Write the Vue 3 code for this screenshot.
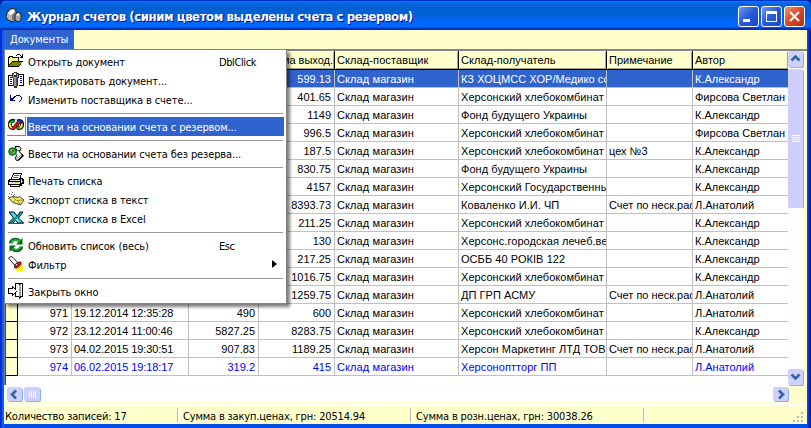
<script setup>
const menu = [
  { icon: 'open', text: 'Открыть документ', key: 'DblClick' },
  { icon: 'edit', text: 'Редактировать документ...' },
  { icon: 'undo', text: 'Изменить поставщика в счете...' },
  null,
  { icon: 'chain', text: 'Ввести на основании счета с резервом...', active: true },
  null,
  { icon: 'scroll', text: 'Ввести на основании счета без резерва...' },
  null,
  { icon: 'print', text: 'Печать списка' },
  { icon: 'mail', text: 'Экспорт списка в текст' },
  { icon: 'excel', text: 'Экспорт списка в Excel' },
  null,
  { icon: 'refresh', text: 'Обновить список (весь)', key: 'Esc' },
  { icon: 'torch', text: 'Фильтр', sub: true },
  null,
  { icon: 'exit', text: 'Закрыть окно' },
]

const bread = 'Херсонский хлебокомбинат'
const alex = 'К.Александр'
const firs = 'Фирсова Светлан'
const anat = 'Л.Анатолий'
const note = 'Счет по неск.рас'
const store = 'Склад магазин'
const rows = [
  ['', '', '', '599.13', store, 'КЗ ХОЦМСС ХОР/Медико со', '', alex],
  ['', '', '', '401.65', store, bread, '', firs],
  ['', '', '', '1149', store, 'Фонд будущего Украины', '', alex],
  ['', '', '', '996.5', store, bread, '', firs],
  ['', '', '', '187.5', store, bread, 'цех №3', alex],
  ['', '', '', '830.75', store, 'Фонд будущего Украины', '', alex],
  ['', '', '', '4157', store, 'Херсонский Государственны', '', alex],
  ['', '', '', '8393.73', store, 'Коваленко И.И. ЧП', note, anat],
  ['', '', '', '211.25', store, bread, '', alex],
  ['', '', '', '130', store, 'Херсонс.городская лечеб.ве', '', alex],
  ['', '', '', '217.25', store, 'ОСББ 40 РОКІВ 122', '', alex],
  ['', '', '', '1016.75', store, bread, '', alex],
  ['', '', '', '1259.75', store, 'ДП ГРП АСМУ', note, anat],
  ['971', '19.12.2014 12:35:28', '490', '600', store, bread, '', anat],
  ['972', '23.12.2014 11:00:46', '5827.25', '8283.75', store, bread, '', alex],
  ['973', '04.02.2015 19:30:51', '907.83', '1189.25', store, 'Херсон Маркетинг ЛТД ТОВ', note, anat],
  ['974', '06.02.2015 19:18:17', '319.2', '415', store, 'Херсоноптторг ПП', '', anat],
]
const heads = ['', '', '', 'Сумма выход.', 'Склад-поставщик', 'Склад-получатель', 'Примечание', 'Автор']
</script>

<template>
  <div class="window">
    <header class="title">
      <svg class="app-icon" width="16" height="16" viewBox="0 0 16 16">
        <path d="M1 5 L4 1 L8 0 L10 3 L10 11 L7 14 L2 12 L0 9Z" fill="#b8b8b8" stroke="#222" stroke-width="1" />
        <path d="M2 5 L5 2 L8 2 L8 5 L5 7Z" fill="#fff" />
        <path d="M6 7 L9 4 L9 11 L6 13Z" fill="#777" />
        <path d="M9 7 L12 4 L15 6 L15 12 L12 14 L9 12Z" fill="#aaa" stroke="#222" />
        <path d="M10 7 L12 5 L14 7 L12 8Z" fill="#eee" />
      </svg>
      <h1>Журнал счетов (синим цветом выделены счета с резервом)</h1>
      <div class="controls">
        <span class="ctl"><svg width="19" height="19" viewBox="0 0 19 19"><path d="M4 12h7v3H4z" fill="#fff" /></svg></span>
        <span class="ctl"><svg width="19" height="19" viewBox="0 0 19 19"><path d="M4 4h11v11H4zM5 7v7h9V7z" fill="#fff" fill-rule="evenodd" /></svg></span>
        <span class="ctl close"><svg width="19" height="19" viewBox="0 0 19 19"><path d="M5 5l9 9M14 5l-9 9" stroke="#fff" stroke-width="2.2" /></svg></span>
      </div>
    </header>

    <div class="body">
      <nav class="menubar"><span class="menu-head">Документы</span></nav>
      <div class="grid-area">
        <div class="sheet">
          <div class="row head">
            <span class="ind"></span>
            <span v-for="(h, i) in heads" :key="i" class="cell" :class="'c' + i"><span>{{ h }}</span></span>
          </div>
          <div v-for="(r, n) in rows" :key="n" class="row" :class="{ sel: n === 0, blue: n === 16 }">
            <span class="ind"></span>
            <span v-for="(v, i) in r" :key="i" class="cell" :class="'c' + i"><span>{{ v }}</span></span>
          </div>
        </div>
        <div class="vbar">
          <span class="sb"><svg width="15" height="15" viewBox="0 0 15 15"><path d="M3.5 9.5l4-4 4 4" /></svg></span>
          <span class="vthumb"><i></i><i></i><i></i><i></i></span>
          <span class="vtrack"></span>
          <span class="sb"><svg width="15" height="15" viewBox="0 0 15 15"><path d="M3.5 5.5l4 4 4-4" /></svg></span>
        </div>
      </div>
      <div class="hbar">
        <span class="sb"><svg width="15" height="15" viewBox="0 0 15 15"><path d="M9 3.5l-4 4 4 4" /></svg></span>
        <span class="hthumb"><i></i><i></i><i></i><i></i></span>
        <span class="htrack"></span>
        <span class="sb"><svg width="15" height="15" viewBox="0 0 15 15"><path d="M6 3.5l4 4-4 4" /></svg></span>
      </div>
      <footer class="status">
        <span class="s1">Количество записей: 17</span>
        <span class="s2">Сумма в закуп.ценах, грн: 20514.94</span>
        <span class="s3">Сумма в розн.ценах, грн: 30038.26</span>
        <span class="s4"></span>
        <svg class="grip" width="11" height="11" viewBox="0 0 11 11"><path d="M8 0h2v2h-2zM4 4h2v2h-2zM8 4h2v2h-2zM0 8h2v2h-2zM4 8h2v2h-2zM8 8h2v2h-2z" fill="#b8b4b0" /></svg>
      </footer>
    </div>

    <div class="popup">
      <template v-for="(m, i) in menu" :key="i">
        <div v-if="!m" class="sep"></div>
        <div v-else class="item" :class="{ active: m.active }">
          <span class="ico">
            <svg width="16" height="16" viewBox="0 0 16 16" shape-rendering="crispEdges">
              <g v-if="m.icon === 'open'">
                <path d="M0 4h1V3h4v1h6v4h4l-4 6H0z" fill="#000" />
                <path d="M1 5h1V4h2v1h6v3H4l-3 4z" fill="#ffff80" />
                <path d="M4 9h10l-3 4H1z" fill="#808000" />
                <path d="M8 2h1V1h3v1h1v1h1V1h1v4h-3V4h1V3h-1V2H9v1H8z" fill="#000" />
              </g>
              <g v-else-if="m.icon === 'edit'">
                <path d="M0 3h5v11H0zM11 2h5v12h-5z" fill="#000" />
                <path d="M1 4h4v9H1zM11 3h4v10h-4z" fill="#fff" />
                <path d="M2 5h2v1H2zM2 7h2v1H2zM2 9h2v1H2zM2 11h2v1H2zM12 4h2v1h-2zM12 6h2v1h-2zM12 8h2v1h-2zM12 10h2v1h-2z" fill="#0000c0" />
                <path d="M4 1h2V0h3v1h2v5h-1v8H9v2H6v-2H5V6H4z" fill="#333" />
                <path d="M5 2h1v3h3V2h1v3H9v9H6V6H5z" fill="#999" />
                <path d="M6 1h2v2H6z" fill="#fff" />
                <path d="M8 6h1v8H8z" fill="#555" />
              </g>
              <g v-else-if="m.icon === 'undo'" fill="#000080">
                <path d="M2 4h1v3h1v1h1v1h2v1H2z" />
                <path d="M4 7h1V6h1V5h2V4h4v1h1v1h1v3h-1v1h-1v1h-1v-1h1V9h1V6h-1V5H8v1H7v1H6v1H4z" />
              </g>
              <g v-else-if="m.icon === 'chain'" fill="none" shape-rendering="auto">
                <path d="M6.5 3.2C4 2 1.8 3.500 1.800 6.500s2.500 4.500 4.700 3.200M9.500 3.500C12 2 14.200 3.500 14.200 6.500S12 11 9.500 9.700" stroke="#000" stroke-width="3.800" />
                <path d="M6.500 9.700L11 4" stroke="#000" stroke-width="4" />
                <path d="M7 4C5 2.600 3 3 2 5" stroke="#00b030" stroke-width="2" />
                <path d="M2 5C1.400 7 2 9 4 10" stroke="#ffee00" stroke-width="2" />
                <path d="M9.500 4C12 2.500 13.500 3.500 14 5.500" stroke="#2020ff" stroke-width="2" />
                <path d="M14 5.500C14.400 8 13 9.800 11 10" stroke="#ffee00" stroke-width="2" />
                <path d="M11.500 10.200L9 9.200" stroke="#00b030" stroke-width="2" />
                <path d="M4 10.200C7 11 9 4 12 3.600" stroke="#f01010" stroke-width="2.200" />
                <path d="M4 6.500h1.500M11 7.200h1" stroke="#fff" stroke-width="1.500" />
              </g>
              <g v-else-if="m.icon === 'scroll'" shape-rendering="auto">
                <path d="M7 1.500h4.500l1.500 2-.5 2L9 6zM10.500 5.500l4.500 5-5.500 5-1.500-.5-.5-2z" fill="#e8e8e8" stroke="#000" />
                <path d="M8 7l2-2 3.500 5-4 3z" fill="#fff" stroke="#777" stroke-width=".7" />
                <path d="M13.500 9.500l1.500 1.500-5 4.500" fill="none" stroke="#000" stroke-width="1.300" />
                <circle cx="4.500" cy="6.500" r="3.800" fill="#00c840" stroke="#004818" />
                <path d="M3 5h3v3H3z" fill="#e82020" />
                <path d="M3 5h1v1H3zM5 7h1v1H5z" fill="#ffee20" />
              </g>
              <g v-else-if="m.icon === 'print'">
                <path d="M5 1h9v2h-1v3h2v1h1v5h-2v2h-2v1H2v-2H0V8h1V7h2V5h1V3h1z" fill="#000" />
                <path d="M6 2h7L11 7H4l1-3z" fill="#fff" />
                <path d="M6 3h5v1H6zM5 5h5v1H5z" fill="#555" />
                <path d="M2 8h10v1H2zM1 10h11v2H1zM13 8h1v3h-1z" fill="#e4e4e4" />
                <path d="M3 13h8v1H3z" fill="#fff" />
                <path d="M7 10h3v1H7z" fill="#e0d000" />
                <path d="M13 7h1v1h-1zM14 9h1v1h-1z" fill="#888" />
              </g>
              <g v-else-if="m.icon === 'mail'" shape-rendering="auto">
                <path d="M.5 7L5 5.500l5 1 1.500-1L16 9l-3.500 5L5 11.500z" fill="#f5e56b" stroke="#333" stroke-width=".9" />
                <path d="M5 6l3.500 3.500L15 9M5 11l2.500-2M10 9.500l2 4" fill="none" stroke="#8d7a00" stroke-width=".8" />
                <path d="M1 2h1v1H1zM4 1h1v1H4zM3 3h1v1H3zM6 3h1v1H6zM0 5h1v1H0zM5 4h1v1H5z" fill="#666" />
              </g>
              <g v-else-if="m.icon === 'excel'" shape-rendering="auto">
                <path d="M1 2h5l3 4 3-4h3l-4.500 6 5 5H10L7.500 10.500 5 13H.5l5-5z" fill="#48dede" stroke="#000" />
                <path d="M14.500 2.500L9 8l-5 5H1l5.500-5L12 2.500z" fill="#008888" />
                <path d="M.5 13.500h15" stroke="#006868" />
              </g>
              <g v-else-if="m.icon === 'refresh'" shape-rendering="auto">
                <path d="M2.500 6.500C3 2.500 8 1 11.500 4" fill="none" stroke="#006b16" stroke-width="3.400" />
                <path d="M14.500 1v6.500H8z" fill="#006b16" />
                <path d="M3 6C4 2.800 8 1.800 11.500 4.500" fill="none" stroke="#40c850" stroke-width="1.300" />
                <path d="M13.500 9.500C13 13.500 8 15 4.500 12" fill="none" stroke="#006b16" stroke-width="3.400" />
                <path d="M1.500 15V8.500H8z" fill="#006b16" />
                <path d="M13 10C12 13 8 14 4.500 11.500" fill="none" stroke="#20a830" stroke-width="1.300" />
              </g>
              <g v-else-if="m.icon === 'torch'">
                <g shape-rendering="auto">
                  <path d="M.5 2L3 .5l2 1 4.500 5L6.500 9z" fill="#fff" stroke="#222" />
                  <path d="M6.500 9.500L10 6h3v2.500L9.500 12h-3z" fill="#d81818" stroke="#500" stroke-width=".8" />
                </g>
                <path d="M8 8h1v1H8z" fill="#fff" />
                <path d="M13 9h1v1h-1zM12 10h1v1h-1zM14 10h1v1h-1zM11 11h1v1h-1zM13 11h1v1h-1zM10 12h1v1h-1zM12 12h1v1h-1zM14 12h1v1h-1zM9 13h1v1H9zM11 13h1v1h-1zM13 13h1v1h-1zM8 14h1v1H8zM10 14h1v1h-1zM12 14h1v1h-1zM14 14h1v1h-1z" fill="#f5e600" />
              </g>
              <g v-else>
                <path d="M7 0h8v14h-2v1h-1v1h-1v-2H7v-3H6v1H5v1H4v-2H0V5h4V3h1v1h1v1h1z" fill="#000" />
                <path d="M8 1h3v12H8V9h1V8H8zM1 6h4V5l3 3-3 3v-1H1z" fill="#fff" />
                <path d="M10 3h1V2h1V1h1v12h-1v1h-1V3z" fill="#a0a0a0" />
                <path d="M13 1h1v12h-1z" fill="#fff" />
              </g>
            </svg>
          </span>
          <span class="lbl"><span>{{ m.text }}</span><span v-if="m.key" class="key">{{ m.key }}</span><i v-if="m.sub" class="arr"></i></span>
        </div>
      </template>
    </div>
  </div>
</template>

<style>
body { background: #00209f; overflow: hidden; }
</style>

<style scoped>
* { box-sizing: border-box; }
.window {
  position: relative; width: 811px; height: 428px; display: flex; flex-direction: column;
  padding: 0 4px 4px 4px; overflow: hidden; border-radius: 7px 7px 0 0;
  background: linear-gradient(90deg, #0028c8 0, #0033d8 2px, #0064ff 2px, #0064ff 4px, #0050e8 4px, #0050e8 807px, #0048e8 808px, #0028b0 809px, #001898 811px);
  font: 11px "DejaVu Sans Condensed", "DejaVu Sans", sans-serif; font-stretch: condensed; color: #000;
}
.title {
  height: 30px; margin: 0 -4px; padding: 3px 6px 0 6px; display: flex; align-items: center; flex: none;
  background: linear-gradient(#0030c0 0, #0038d0 1px, #0878ff 1px, #0860e0 4px, #0060d0 8px, #0062dc 16px, #0068ff 21px, #0068ff 27px, #0038c8 28px, #0028b8 30px);
}
.app-icon { flex: none; margin-top: -1px; }
h1 { margin: 0 0 0 5px; flex: 1; font-size: 13px; font-weight: bold; line-height: 20px; letter-spacing: -.41px; color: #fff; white-space: nowrap; text-shadow: 1px 1px #001080; }
.controls { display: flex; gap: 2px; }
.ctl { width: 21px; height: 21px; border: 1px solid #fff; border-radius: 3px; background: linear-gradient(135deg, #6f98f0, #2858d8 50%, #1d48c8); display: flex; }
.ctl svg { flex: none; }
.close { background: linear-gradient(135deg, #f09070, #d84828 50%, #b83010); }
.body { display: flex; flex-direction: column; height: 394px; background: #ffffcc; }
.menubar { height: 19px; flex: none; }
.menu-head { display: block; width: 70px; height: 19px; padding-left: 6px; line-height: 19px; letter-spacing: -.1px; color: #fff; background: #3163ce; white-space: nowrap; }
.grid-area { display: flex; height: 336px; border-top: 2px solid #848284; border-left: 1px solid #848284; padding-right: 3px; }
.sheet { flex: 1; background: #fff; overflow: hidden; border-left: 1px solid #444; display: flex; flex-direction: column; }
.row { display: flex; height: 18px; flex: none; font: 11px "Liberation Sans", Arial, sans-serif; }
.head { height: 19px; background: #ffffcc; }
.ind { width: 12px; flex: none; background: #ffffcc; border-right: 1px solid #000; border-bottom: 1px solid #000; }
.cell { border-right: 1px solid #c0c0c0; border-bottom: 1px solid #c0c0c0; padding: 1px 3px 0 2px; line-height: 17px; white-space: nowrap; overflow: hidden; flex: none; }
.head .cell { border-right: 1px solid #000; border-bottom: 1px solid #000; box-shadow: inset 1px 1px #fff, inset -1px -1px #aaa58c; }
.sel .cell { background: #3163ce; color: #fff; }
.blue { color: #0000ff; }
.c0 { width: 54px; text-align: right; }
.c1 { width: 117px; letter-spacing: -.08px; }
.c2 { width: 70px; text-align: right; }
.c3 { width: 76px; text-align: right; }
.c4 { width: 124px; letter-spacing: .1px; }
.c5 { width: 148px; letter-spacing: .06px; padding-right: 0; }
.c6 { width: 86px; padding-right: 0; }
.c7 { width: 96px; padding-right: 0; border-right: 0; }
.vbar { width: 16px; flex: none; display: flex; flex-direction: column; background: #fff; }
.sb { width: 15px; height: 16px; flex: none; display: flex; background: #cecffa; border-radius: 2px; box-shadow: 1px 1px #84b8d8; }
.sb path { fill: none; stroke: #31659c; stroke-width: 2.6; }
.vthumb { height: 139px; margin-top: 2px; width: 15px; flex: none; background: #cecfff; border-radius: 2px; box-shadow: 1px 1px #84b8d8; display: flex; flex-direction: column; align-items: center; justify-content: center; gap: 1px; }
.vthumb i { width: 8px; height: 1px; background: #fff; }
.vtrack { flex: 1; background: #fefefa; }
.hbar { height: 18px; flex: none; margin: 0 19px 1px 1px; padding: 1px 0 1px 2px; display: flex; background: #fff; border-top: 1px solid #ffffcc; border-bottom: 1px solid #ffffcc; }
.hbar .sb { height: 14px; }
.hthumb { width: 16px; height: 14px; margin-left: 2px; background: #cecfff; border-radius: 2px; box-shadow: 1px 1px #84b8d8; display: flex; align-items: center; justify-content: center; gap: 1px; }
.hthumb i { width: 1px; height: 7px; background: #fff; }
.htrack { flex: 1; }
.status { height: 20px; flex: none; display: flex; align-items: flex-start; border-top: 1px solid #fff; padding-right: 3px; letter-spacing: -.17px; }
.status span { height: 14px; margin-top: 3px; line-height: 17px; white-space: nowrap; border-right: 1px solid #b8b8b8; box-shadow: 1px 0 #fff; padding-left: 5px; }
.s1 { width: 174px; }
.s1.s1 { padding-left: 1px; }
.s2 { width: 233px; }
.s3 { width: 233px; }
.status .s4 { flex: 1; border: 0; box-shadow: none; }
.grip { margin-top: 7px; }

.popup { position: absolute; left: 4px; top: 49px; width: 283px; height: 255px; padding: 2px; background: #fff; border: 1px solid #848284; box-shadow: 3px 3px 3px rgba(0,0,0,.5); }
.item { display: flex; height: 19px; }
.ico { width: 19px; height: 19px; flex: none; padding: 1px 0 0 1px; margin-right: 1px; }
.active .ico { border-right: 1px solid #848284; border-bottom: 1px solid #848284; }
.lbl { flex: 1; display: flex; padding: 1px 0 0 1px; line-height: 19px; letter-spacing: -.12px; white-space: nowrap; position: relative; }
.active .lbl { background: #3163ce; color: #fff; }
.key { position: absolute; left: 192px; top: 1px; letter-spacing: -.4px; }
.arr { position: absolute; right: 7px; top: 5px; border-left: 5px solid #000; border-top: 4px solid transparent; border-bottom: 4px solid transparent; }
.sep { height: 8px; padding-top: 4px; }
.sep::before { content: ""; display: block; height: 1px; margin: 0 1px; background: #999; }
</style>
